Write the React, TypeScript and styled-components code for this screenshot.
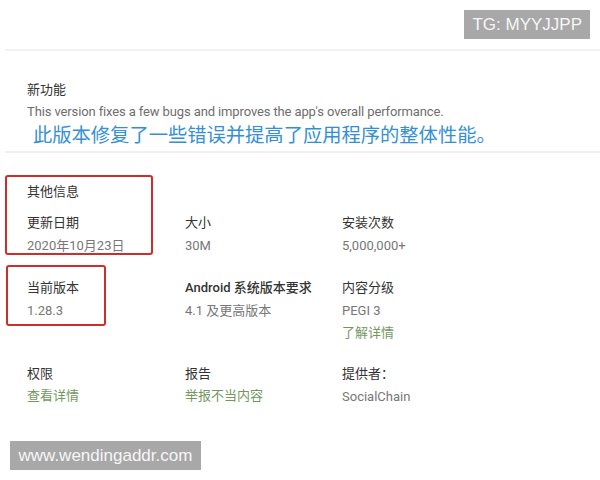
import React from "react";
import styled, { createGlobalStyle } from "styled-components";

const GlobalStyle = createGlobalStyle`
  html, body { margin: 0; padding: 0; background: #ffffff; }
  * { box-sizing: border-box; }
`;

const FONT = `Roboto, "Noto Sans CJK SC", sans-serif`;

const Page = styled.div`
  position: relative;
  width: 600px;
  height: 480px;
  overflow: hidden;
  background: #ffffff;
  font-family: ${FONT};
`;

const TopBar = styled.div`
  height: 49px;
  display: flex;
  justify-content: flex-end;
  align-items: flex-start;
  padding: 10px 10px 0 0;
`;

const Watermark = styled.div<{ $pad?: number }>`
  height: 29px;
  display: flex;
  align-items: center;
  padding: 0 ${(p) => p.$pad ?? 10}px;
  background: #a8a8a8;
  color: #f6f6f6;
  font-family: "Liberation Sans", Arial, sans-serif;
  font-size: 17px;
  white-space: nowrap;
`;

const Divider = styled.div`
  height: 2px;
  margin-left: 5px;
  background: #f1f1f1;
`;

const WhatsNew = styled.section`
  padding: 27px 0 2px 27px;
`;

const SectionTitle = styled.div`
  font-size: 13px;
  line-height: 23px;
  color: #333333;
`;

const Body = styled.div`
  font-size: 13px;
  line-height: 21px;
  letter-spacing: -0.12px;
  color: #6e6e6e;
`;

const Translation = styled.div`
  margin-left: 6px;
  font-size: 19.3px;
  line-height: 27px;
  color: #3490d4;
`;

const Details = styled.section`
  padding: 27px 0 0 27px;
`;

const Heading = styled(SectionTitle)`
  margin-bottom: 8px;
`;

const Grid = styled.div`
  display: grid;
  grid-template-columns: 158px 157px 200px;
  row-gap: 19px;
`;

const Cell = styled.div`
  display: flex;
  flex-direction: column;
`;

const Label = styled.div<{ $strong?: boolean }>`
  font-size: 13px;
  line-height: 23px;
  color: #333333;
  font-weight: ${(p) => (p.$strong ? 500 : 400)};
`;

const Value = styled.div<{ $link?: boolean }>`
  font-size: 13px;
  line-height: ${(p) => (p.$link ? 21 : 23)}px;
  color: ${(p) => (p.$link ? "#73985f" : "#777777")};
`;

const Footer = styled.div`
  display: flex;
  margin: 33px 0 0 10px;
`;

const Highlight = styled.div`
  position: absolute;
  border: 2px solid #cc2f2a;
  border-radius: 3px;
`;

type Item = { label: string; values: { text: string; link?: boolean }[]; strong?: boolean };

const items: Item[] = [
  { label: "更新日期", values: [{ text: "2020年10月23日" }] },
  { label: "大小", values: [{ text: "30M" }] },
  { label: "安装次数", values: [{ text: "5,000,000+" }] },
  { label: "当前版本", values: [{ text: "1.28.3" }] },
  { label: "Android 系统版本要求", strong: true, values: [{ text: "4.1 及更高版本" }] },
  { label: "内容分级", values: [{ text: "PEGI 3" }, { text: "了解详情", link: true }] },
  { label: "权限", values: [{ text: "查看详情", link: true }] },
  { label: "报告", values: [{ text: "举报不当内容", link: true }] },
  { label: "提供者：", values: [{ text: "SocialChain" }] },
];

export default function App() {
  return (
    <Page>
      <GlobalStyle />
      <TopBar>
        <Watermark $pad={8}>TG: MYYJJPP</Watermark>
      </TopBar>
      <Divider />
      <WhatsNew>
        <SectionTitle>新功能</SectionTitle>
        <Body>This version fixes a few bugs and improves the app's overall performance.</Body>
        <Translation>此版本修复了一些错误并提高了应用程序的整体性能。</Translation>
      </WhatsNew>
      <Divider />
      <Details>
        <Heading>其他信息</Heading>
        <Grid>
          {items.map((it) => (
            <Cell key={it.label}>
              <Label $strong={it.strong}>{it.label}</Label>
              {it.values.map((v) => (
                <Value key={v.text} $link={v.link}>
                  {v.text}
                </Value>
              ))}
            </Cell>
          ))}
        </Grid>
      </Details>
      <Footer>
        <Watermark $pad={8.5}>www.wendingaddr.com</Watermark>
      </Footer>
      <Highlight style={{ left: 5, top: 175, width: 148, height: 80 }} />
      <Highlight style={{ left: 6, top: 265, width: 100, height: 61 }} />
    </Page>
  );
}
